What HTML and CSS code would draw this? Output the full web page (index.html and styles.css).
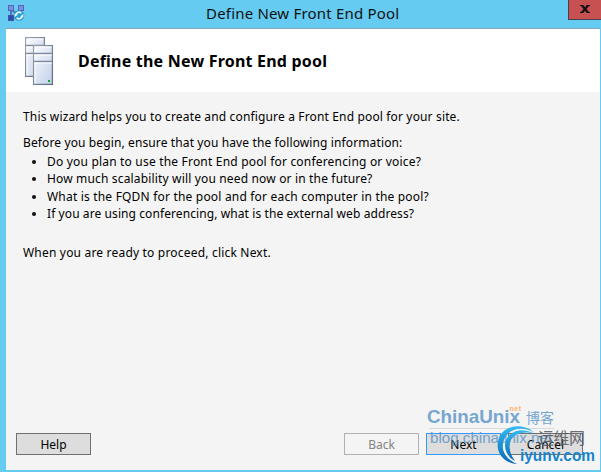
FILE: index.html
```html
<!DOCTYPE html>
<html lang="en">
<head>
  <meta charset="UTF-8" />
  <title>Define New Front End Pool</title>
  <link rel="stylesheet" href="styles.css">
</head>
<body>
  <div class="window">
    <div class="titlebar">
      <svg class="app-icon" width="18" height="18" viewBox="0 0 18 18">
        <path d="M3 4V13M3 4L12 12M13 4L5 13" stroke="#5276b8" stroke-width="2" fill="none" />
        <rect x="0.5" y="0.5" width="5" height="5" fill="#6f93e6" stroke="#5b62b0" />
        <rect x="10.5" y="0.5" width="5" height="5" fill="#6f93e6" stroke="#5b62b0" />
        <rect x="0.5" y="10.5" width="5" height="5" fill="#2850b4" stroke="#4054a0" />
        <circle cx="11" cy="10.5" r="4.3" fill="#2aa0d8" stroke="#2396cc" stroke-width="2" />
        <path d="M7.7 10.5a3.3 3.3 0 0 1 5.6-2.4M14.3 10.5a3.3 3.3 0 0 1-5.6 2.4" stroke="#e8ffff" stroke-width="1.6" fill="none" />
        <path d="M15.4 8.6v3.4h-3.2zM6.6 12.4V9h3.2z" fill="#e8ffff" />
      </svg>
      <span class="title">Define New Front End Pool</span>
      <button class="close" aria-label="Close">
        <svg width="10" height="8" viewBox="0 0 10 8">
          <path d="M0 0H3.2L5 2.3 6.8 0H10V1H9L6.4 4 9 7H10V8H6.8L5 5.7 3.2 8H0V7H1L3.6 4 1 1H0z" fill="#111" />
        </svg>
      </button>
    </div>

    <div class="client">
      <div class="header">
        <svg class="servers" width="30" height="50" viewBox="0 0 30 50">
          <defs>
            <linearGradient id="face" x1="0" y1="0" x2="1" y2="1">
              <stop offset="0" stop-color="#fff" />
              <stop offset="0.4" stop-color="#e3e9f5" />
              <stop offset="1" stop-color="#c3d0ea" />
            </linearGradient>
            <linearGradient id="edge" x1="0" y1="0" x2="1" y2="1">
              <stop offset="0" stop-color="#98a3b1" />
              <stop offset="1" stop-color="#5d6c82" />
            </linearGradient>
            <g id="server">
              <rect x="0.6" y="0.6" width="18.8" height="38.8" fill="url(#face)" stroke="url(#edge)" stroke-width="1.3" />
              <path d="M2 38.5V2H18.5" stroke="#fff" fill="none" />
              <path d="M1 8.6H19M1 16.6H19" stroke="#7d899c" stroke-width="1.5" />
              <path d="M1 10H19M1 18H19" stroke="#fff" />
            </g>
          </defs>
          <use href="#server" x="0" y="0" />
          <use href="#server" x="8" y="8" />
          <rect x="23" y="43" width="2" height="2" fill="#12a52e" />
        </svg>
        <h1>Define the New Front End pool</h1>
      </div>

      <div class="content">
        <p class="intro">This wizard helps you to create and configure a Front End pool for your site.</p>
        <p class="before">Before you begin, ensure that you have the following information:</p>
        <ul>
          <li class="q1">Do you plan to use the Front End pool for conferencing or voice?</li>
          <li class="q2">How much scalability will you need now or in the future?</li>
          <li class="q3">What is the FQDN for the pool and for each computer in the pool?</li>
          <li class="q4">If you are using conferencing, what is the external web address?</li>
        </ul>
        <p class="ready">When you are ready to proceed, click Next.</p>
      </div>

      <div class="footer">
        <button class="btn help">Help</button>
        <button class="btn" disabled>Back</button>
        <button class="btn next">Next</button>
        <button class="btn">Cancel</button>
      </div>
    </div>

    <!-- site watermarks over the corner -->
    <svg class="watermark" width="191" height="72" viewBox="0 0 191 72">
      <defs>
        <linearGradient id="swirl" x1="0" y1="0" x2="0" y2="1">
          <stop offset="0" stop-color="#35baf0" />
          <stop offset="1" stop-color="#0868b4" />
        </linearGradient>
      </defs>
      <g class="unix">
        <text class="unix-name" x="17" y="23" textLength="93" lengthAdjust="spacingAndGlyphs">ChinaUnix</text>
        <text class="unix-net" x="97" y="11" textLength="14">.net</text>
        <text class="unix-cn" x="116" y="23" textLength="28">博客</text>
        <path d="M19 28.5H144" stroke="#d2d2d2" />
        <text class="unix-url" x="20" y="43" textLength="122" lengthAdjust="spacingAndGlyphs">blog.chinaunix.net</text>
      </g>
      <g class="iyunv">
        <path d="M125 33C113 22 94 25 89 38 84 51 93 63 107 64 96 59 90 50 94 40 98 29 112 25 125 33z" fill="url(#swirl)" />
        <path d="M123 33C111 27 100 31 96 40 93 48 97 57 105 61 100 54 98 47 101 40 104 34 113 31 123 33z" fill="url(#swirl)" />
        <text class="iyunv-cn" x="128" y="44" textLength="47">运维网</text>
        <text class="iyunv-url" x="110" y="61" textLength="75" lengthAdjust="spacingAndGlyphs">iyunv.com</text>
      </g>
    </svg>
  </div>
</body>
</html>
```

FILE: styles.css
```css
* {
  box-sizing: border-box;
}
body {
  margin: 0;
  font-family: "Noto Sans", "Open Sans", sans-serif;
  font-size: 12px;
  color: #000;
}
.window {
  position: relative;
  width: 601px;
  height: 472px;
  padding: 0 1px 2px 6px;
  background: #65cbf1;
  overflow: hidden;
  display: flex;
  flex-direction: column;
}
.titlebar {
  height: 28px;
  display: flex;
  align-items: flex-start;
}
.app-icon {
  margin: 5px 0 0 2px;
}
.title {
  margin-left: 180px;
  font-size: 15px;
  line-height: 27px;
  letter-spacing: 0.19px;
  color: #111;
  white-space: nowrap;
}
.close {
  margin-left: auto;
  margin-right: -2px;
  width: 34px;
  height: 20px;
  padding: 0 0 2px;
  background: #c75050;
  border: 1px solid #45414f;
  border-top: none;
  display: flex;
  align-items: center;
  justify-content: center;
}
.client {
  flex: 1;
  border-top: 1px solid #87a6c6;
  background: #f4f4f4;
  display: flex;
  flex-direction: column;
}
.header {
  height: 63px;
  padding: 8px 0 0 19px;
  background: #fff;
  display: flex;
}
h1 {
  margin: 11px 0 0 23px;
  font-size: 16px;
  line-height: 26px;
  letter-spacing: 0.21px;
  white-space: nowrap;
}
.content {
  flex: 1;
  padding: 16px 0 0 17px;
  line-height: 18px;
  white-space: nowrap;
}
p {
  margin: 0;
}
.intro {
  letter-spacing: 0.15px;
}
.before {
  margin-top: 8px;
  letter-spacing: 0.12px;
}
ul {
  margin: 1px 0 0;
  padding-left: 24px;
  list-style: none;
  line-height: 17.4px;
}
li {
  position: relative;
}
li::before {
  content: "";
  position: absolute;
  left: -15px;
  top: 7px;
  width: 4px;
  height: 4px;
  border-radius: 50%;
  background: #111;
}
.q1,
.q3 {
  letter-spacing: 0.19px;
}
.q2 {
  letter-spacing: 0.16px;
}
.q4 {
  letter-spacing: 0.09px;
}
.ready {
  margin-top: 21px;
  letter-spacing: 0.19px;
}
.footer {
  padding: 0 17px 15px 10px;
  display: flex;
  gap: 7px;
}
.btn {
  width: 75px;
  height: 22px;
  padding: 1px 0 0;
  font: inherit;
  line-height: 20px;
  color: #000;
  background: #ddd;
  border: 1px solid #707070;
}
.btn:disabled {
  color: #838383;
  background: #f4f4f4;
  border-color: #adb2b5;
}
.help {
  margin-right: auto;
}
.next {
  border-color: #3399ff;
}
.watermark {
  position: absolute;
  left: 410px;
  top: 400px;
}
.unix {
  font-family: "Liberation Sans", "Noto Sans CJK SC", sans-serif;
  fill: #4c8dc4;
  opacity: 0.75;
}
.unix-name {
  font-size: 19px;
  font-weight: bold;
}
.unix-net {
  font-size: 7px;
  font-weight: bold;
  fill: #ff9c3a;
}
.unix-cn {
  font-size: 14px;
}
.unix-url {
  font-size: 15px;
}
.iyunv-cn {
  font-family: "Noto Sans CJK SC", sans-serif;
  font-size: 16px;
  fill: #53565d;
  opacity: 0.85;
}
.iyunv-url {
  font-family: "Liberation Sans", sans-serif;
  font-size: 16px;
  font-weight: bold;
  fill: #1684cc;
}
```
